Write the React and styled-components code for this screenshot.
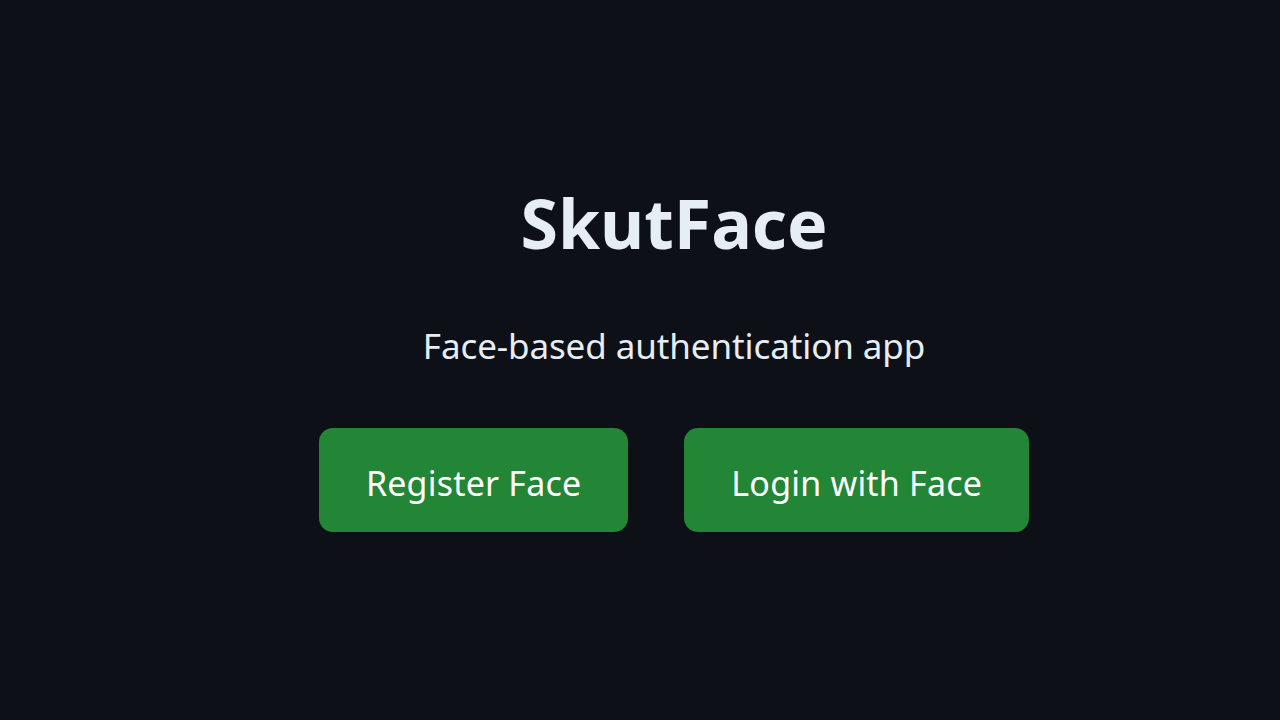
import styled, { createGlobalStyle } from "styled-components";

const GlobalStyle = createGlobalStyle`
  html, body {
    margin: 0;
    padding: 0;
    background: #0d1117;
  }
  #root {
    min-height: 100vh;
  }
`;

const Page = styled.main`
  box-sizing: border-box;
  min-height: 100vh;
  padding: 0 0 3px 68px;
  display: flex;
  flex-direction: column;
  align-items: center;
  justify-content: center;
  background: #0d1117;
  color: #e6edf3;
  font-family: "Noto Sans", "Open Sans", sans-serif;
`;

const Title = styled.h1`
  margin: 0;
  font-size: 68px;
  font-weight: 700;
  line-height: 80px;
  position: relative;
  top: -2px;
`;

const Subtitle = styled.p`
  margin: 59px 0 60px;
  font-size: 35px;
  line-height: 44px;
  letter-spacing: -0.1px;
`;

const Actions = styled.div`
  display: flex;
  gap: 56px;
`;

const ActionButton = styled.button`
  box-sizing: border-box;
  height: 104px;
  padding: 6px 47px 0;
  border: none;
  border-radius: 14px;
  background: #238636;
  color: #ffffff;
  font-family: inherit;
  font-size: 34px;
  letter-spacing: 0.2px;
  cursor: pointer;
`;

export default function App() {
  return (
    <>
      <GlobalStyle />
      <Page>
        <Title>SkutFace</Title>
        <Subtitle>Face-based authentication app</Subtitle>
        <Actions>
          <ActionButton>Register Face</ActionButton>
          <ActionButton>Login with Face</ActionButton>
        </Actions>
      </Page>
    </>
  );
}
